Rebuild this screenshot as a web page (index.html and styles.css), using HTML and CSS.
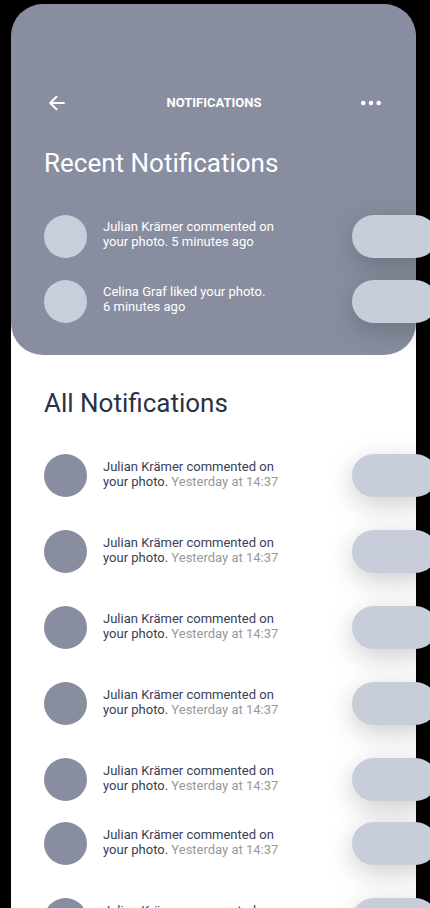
FILE: index.html
```html
<!DOCTYPE html>
<html lang="en">
<head>
<meta charset="utf-8">
<meta name="viewport" content="width=device-width, initial-scale=1">
<title>Notifications</title>
<link rel="stylesheet" href="styles.css">
</head>
<body>
<main class="phone">
  <header class="recent">
    <nav class="topbar">
      <button class="icon-button" type="button" aria-label="Back">
        <svg width="20" height="20" viewBox="0 0 20 20" fill="none" stroke="currentColor" stroke-width="2" stroke-linecap="round" stroke-linejoin="round"><path d="M17 10H3.500M9.500 3.700L3.200 10l6.300 6.300"/></svg>
      </button>
      <h1 class="title">NOTIFICATIONS</h1>
      <button class="icon-button" type="button" aria-label="More">
        <svg width="20" height="20" viewBox="0 0 20 20" fill="currentColor"><circle cx="2.300" cy="10" r="2.300"/><circle cx="10" cy="10" r="2.300"/><circle cx="17.700" cy="10" r="2.300"/></svg>
      </button>
    </nav>
    <h2 class="heading">Recent Notifications</h2>
    <ul class="list list-recent">
      <li class="row"><span class="avatar"></span><p class="message">Julian Krämer commented on<br>your photo. <time>5 minutes ago</time></p><button class="pill" type="button" aria-label="Open"></button></li>
      <li class="row"><span class="avatar"></span><p class="message">Celina Graf liked your photo.<br><time>6 minutes ago</time></p><button class="pill" type="button" aria-label="Open"></button></li>
    </ul>
  </header>
  <section class="all">
    <h2 class="heading">All Notifications</h2>
    <ul class="list list-all">
      <li class="row"><span class="avatar"></span><p class="message">Julian Krämer commented on<br>your photo. <time>Yesterday at 14:37</time></p><button class="pill" type="button" aria-label="Open"></button></li>
      <li class="row"><span class="avatar"></span><p class="message">Julian Krämer commented on<br>your photo. <time>Yesterday at 14:37</time></p><button class="pill" type="button" aria-label="Open"></button></li>
      <li class="row"><span class="avatar"></span><p class="message">Julian Krämer commented on<br>your photo. <time>Yesterday at 14:37</time></p><button class="pill" type="button" aria-label="Open"></button></li>
      <li class="row"><span class="avatar"></span><p class="message">Julian Krämer commented on<br>your photo. <time>Yesterday at 14:37</time></p><button class="pill" type="button" aria-label="Open"></button></li>
      <li class="row"><span class="avatar"></span><p class="message">Julian Krämer commented on<br>your photo. <time>Yesterday at 14:37</time></p><button class="pill" type="button" aria-label="Open"></button></li>
    </ul>
    <ul class="list list-all">
      <li class="row"><span class="avatar"></span><p class="message">Julian Krämer commented on<br>your photo. <time>Yesterday at 14:37</time></p><button class="pill" type="button" aria-label="Open"></button></li>
      <li class="row"><span class="avatar"></span><p class="message">Julian Krämer commented on<br>your photo. <time>Yesterday at 14:37</time></p><button class="pill" type="button" aria-label="Open"></button></li>
    </ul>
  </section>
</main>
</body>
</html>
```

FILE: styles.css
```css
* {
  box-sizing: border-box;
  margin: 0;
  padding: 0;
}

body {
  height: 100vh;
  overflow: hidden;
  padding: 4px 14px 0 11px;
  background: #000;
  font-family: Roboto, "Liberation Sans", sans-serif;
}

.phone {
  min-height: 100vh;
  border-radius: 36px 36px 0 0;
  background: #fff;
}

.recent {
  padding: 88px 0 32px 33px;
  border-radius: 32px;
  background: #888e9f;
  color: #fff;
}

.topbar {
  display: flex;
  align-items: center;
  justify-content: space-between;
  padding: 0 35px 0 3px;
}

.icon-button {
  display: flex;
  width: 20px;
  height: 22px;
  align-items: center;
  border: 0;
  background: none;
  color: inherit;
}

.title {
  font-size: 13px;
  line-height: 22px;
  font-weight: 700;
}

.heading {
  font-size: 26px;
  line-height: 32px;
  font-weight: 400;
}

.recent .heading {
  margin-top: 33px;
}

.list {
  display: flex;
  flex-direction: column;
  list-style: none;
}

.list-recent {
  gap: 22px;
  margin-top: 36px;
}

.row {
  display: flex;
  gap: 16px;
}

.avatar {
  flex: none;
  width: 43px;
  height: 43px;
  border-radius: 50%;
  background: #888e9f;
}

.recent .avatar {
  background: #c9cedb;
}

.message {
  flex: 1;
  padding-top: 5px;
  font-size: 13px;
  line-height: 15px;
}

.recent .message {
  padding-top: 4px;
}

.pill {
  flex: none;
  width: 85px;
  height: 43px;
  margin-right: -21px;
  border: 0;
  border-radius: 22px;
  background: #c8cdda;
  box-shadow: 0 8px 28px rgba(0, 0, 0, 0.2);
}

.all {
  padding: 32px 0 0 33px;
  color: #2b3146;
}

.all .message {
  color: #3a4055;
}

.list-all {
  gap: 33px;
  margin-top: 35px;
}

.list-all + .list-all {
  margin-top: 21px;
}

.all time {
  color: #999;
}
```
